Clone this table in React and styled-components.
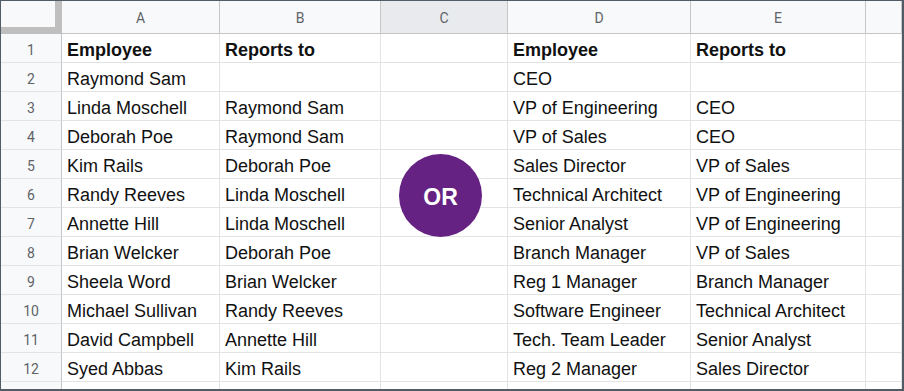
import React from "react";
import styled, { createGlobalStyle } from "styled-components";

const GlobalStyle = createGlobalStyle`
  html, body {
    margin: 0;
    padding: 0;
    background: #ffffff;
  }
`;

const columns = [
  { key: "A", width: 158 },
  { key: "B", width: 161 },
  { key: "C", width: 127, active: true },
  { key: "D", width: 183 },
  { key: "E", width: 175 },
  { key: "F", width: 36, label: "" },
];

const rows = [
  ["Employee", "Reports to", "", "Employee", "Reports to", ""],
  ["Raymond Sam", "", "", "CEO", "", ""],
  ["Linda Moschell", "Raymond Sam", "", "VP of Engineering", "CEO", ""],
  ["Deborah Poe", "Raymond Sam", "", "VP of Sales", "CEO", ""],
  ["Kim Rails", "Deborah Poe", "", "Sales Director", "VP of Sales", ""],
  ["Randy Reeves", "Linda Moschell", "", "Technical Architect", "VP of Engineering", ""],
  ["Annette Hill", "Linda Moschell", "", "Senior Analyst", "VP of Engineering", ""],
  ["Brian Welcker", "Deborah Poe", "", "Branch Manager", "VP of Sales", ""],
  ["Sheela Word", "Brian Welcker", "", "Reg 1 Manager", "Branch Manager", ""],
  ["Michael Sullivan", "Randy Reeves", "", "Software Engineer", "Technical Architect", ""],
  ["David Campbell", "Annette Hill", "", "Tech. Team Leader", "Senior Analyst", ""],
  ["Syed Abbas", "Kim Rails", "", "Reg 2 Manager", "Sales Director", ""],
  ["", "", "", "", "", ""],
];

const Sheet = styled.div`
  position: relative;
  box-sizing: border-box;
  width: 904px;
  height: 391px;
  overflow: hidden;
  border-style: solid;
  border-color: #515c67;
  border-width: 1px 2px 2px 1px;
  background: #fff;
  font-family: "Liberation Sans", Arial, sans-serif;
`;

const HeaderRow = styled.div`
  display: flex;
  height: 33px;
`;

const Corner = styled.div`
  box-sizing: border-box;
  width: 61px;
  flex: none;
  background: #f8f9fa;
  border-right: 7px solid #bfbfbf;
  border-bottom: 7px solid #bfbfbf;
`;

const ColHead = styled.div`
  box-sizing: border-box;
  flex: none;
  display: flex;
  align-items: center;
  justify-content: center;
  background: ${(p) => (p.$active ? "#e8eaed" : "#f8f9fa")};
  border-right: 1px solid #c4c7c5;
  border-bottom: 1px solid #c4c7c5;
  color: #5f6368;
  font-family: Roboto, "Liberation Sans", sans-serif;
  font-size: 14px;
  padding-top: 1px;
`;

const Row = styled.div`
  display: flex;
  height: 29px;
`;

const RowHead = styled.div`
  box-sizing: border-box;
  width: 61px;
  flex: none;
  display: flex;
  align-items: center;
  justify-content: center;
  padding-top: 3px;
  background: #f8f9fa;
  border-right: 1px solid #c4c7c5;
  border-bottom: 1px solid #e2e3e3;
  color: #5f6368;
  font-family: Roboto, "Liberation Sans", sans-serif;
  font-size: 14px;
`;

const Cell = styled.div`
  box-sizing: border-box;
  flex: none;
  display: flex;
  align-items: center;
  padding: 4px 0 0 5px;
  border-right: 1px solid #e2e3e3;
  border-bottom: 1px solid #e2e3e3;
  color: #111;
  font-size: 18px;
  font-weight: ${(p) => (p.$bold ? 700 : 400)};
  white-space: nowrap;
  overflow: hidden;
`;

const OrBadge = styled.div`
  position: absolute;
  left: 398px;
  top: 153px;
  width: 83px;
  height: 83px;
  border-radius: 50%;
  background: #652283;
  color: #fff;
  display: flex;
  align-items: center;
  justify-content: center;
  font-family: "Liberation Sans", Arial, sans-serif;
  font-weight: 700;
  font-size: 23px;
  padding-top: 3px;
  box-sizing: border-box;
`;

export default function App() {
  return (
    <>
      <GlobalStyle />
      <Sheet>
        <HeaderRow>
          <Corner />
          {columns.map((c) => (
            <ColHead key={c.key} $active={c.active} style={{ width: c.width }}>
              {c.label === undefined ? c.key : c.label}
            </ColHead>
          ))}
        </HeaderRow>
        {rows.map((r, i) => (
          <Row key={i}>
            <RowHead>{i < 12 ? i + 1 : ""}</RowHead>
            {r.map((v, j) => (
              <Cell key={j} $bold={i === 0} style={{ width: columns[j].width }}>
                {v}
              </Cell>
            ))}
          </Row>
        ))}
        <OrBadge>OR</OrBadge>
      </Sheet>
    </>
  );
}
